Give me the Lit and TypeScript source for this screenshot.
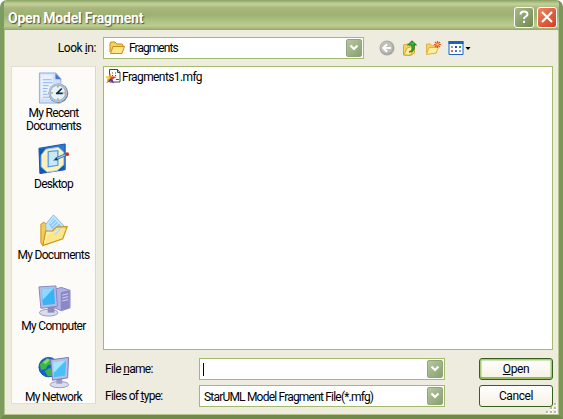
import { LitElement, html, svg, css } from "lit";
import { customElement, property } from "lit/decorators.js";

const base = css`
  * { box-sizing: border-box; }
  svg { display: block; flex: none; }
`;

const recentIcon = svg`
  <path d="M2.500 1.500h17l5 6v25h-22z" fill="#cfe0fa" stroke="#93aee6"/>
  <path d="M4 3h12v25H4z" fill="#f3f8ff" opacity=".7"/>
  <path d="M19 2v6h6z" fill="#4677ca"/>
  <path d="M6 8.500h9M6 11.500h10M6 14.500h6M6 17.500h5M6 20.500h4M6 23.500h5M6 26.500h7" stroke="#8db5f1" stroke-width="1"/>
  <circle cx="22" cy="22.500" r="10.200" fill="#71849b"/>
  <circle cx="21.500" cy="22" r="9.600" fill="#b9c4d0"/>
  <circle cx="21.500" cy="22" r="7.800" fill="#e4f4fd" stroke="#8aa4bb" stroke-width=".8"/>
  <path d="M21 22l4.500-4.500M19.500 22.500h7" stroke="#172d40" stroke-width="1.700"/>
  <path d="M21.500 15v1.600M21.500 27.500v1.500M14.500 22h1.700M27 22h1.600" stroke="#e37b32" stroke-width="1.300"/>`;

const desktopIcon = svg`
  <path d="M2 6L29 1.500v26.500L3 32z" fill="#2878d5" stroke="#1650a3"/>
  <path d="M2.500 7l8-1-8 9zM28 20v8l-9 1.500zM3 25l7 6-7 1z" fill="#1458b5"/>
  <path d="M9 7l13-2 5.500 5v13l-7 6-10 1.500L4.500 25V13z" fill="#fff1bd" stroke="#9ccdf5"/>
  <path d="M11.500 9.500l10-1v15l-10 1.500z" fill="#c8e9fc" stroke="#4d9ce5" stroke-width="1.300"/>
  <path d="M19 16l10-4.500 1 2-10.500 4.500z" fill="#97caf1" stroke="#27659e" stroke-width=".8"/>
  <path d="M16.500 18.500l4-3 1 2.800z" fill="#173a57"/>
  <circle cx="31" cy="12" r="2" fill="#d42e25"/>`;

const documentsIcon = svg`
  <path d="M4 11l3-2 5 4v18l-7 1-1-2z" fill="#f3cc57" stroke="#c79317"/>
  <path d="M9 11L17 1.500 28 13l-7 12-12-8z" fill="#c2e3fb" stroke="#7fb9e6"/>
  <path d="M12 11l5-6 8 8-5 8z" fill="#8fc8f4"/>
  <path d="M13 11l5-5M15 13l5-5M17 15l5-5" stroke="#e4f5ff"/>
  <path d="M9 18h7l4-4 11-.5-4.500 12.500L6 33z" fill="#ffe68a" stroke="#c9961b" stroke-width="1.200"/>
  <path d="M17 19l4-3 5-1-7 8z" fill="#bcdff4"/>
  <path d="M8 30l2.500-10h7l4-3" fill="none" stroke="#fff4b6"/>`;

const computerIcon = svg`
  <path d="M18 5l7-2 9 3v18l-9 3-7-3z" fill="#b2b1e3" stroke="#8584be"/>
  <path d="M24.500 8l9-2v18l-9 3z" fill="#8988c8"/>
  <path d="M26 11l6-1.500M26 14l6-1.500M26 17l6-1.500" stroke="#d6d6f3"/>
  <ellipse cx="12" cy="29" rx="9.500" ry="3.500" fill="#dcdcf0" stroke="#9898c1"/>
  <path d="M11 22h7v7h-7z" fill="#8c8cbd"/>
  <path d="M2 2.500L19.500 1.500l1.500 21-17 2z" fill="#b9bbe5" stroke="#8387c2"/>
  <path d="M4.500 5L17.500 3.500l1 16.500-12.500 1.500z" fill="#38b3f4"/>
  <path d="M4.500 5L17.500 3.500 6 16z" fill="#8bdbff"/>`;

const networkIcon = svg`
  <circle cx="12" cy="12" r="10" fill="#1861ca" stroke="#1550a5"/>
  <path d="M3 9l7-6 7 1-2 5-4 1-2 4-5 1zM8 16l5-3 4 2-1 6-5 0z" fill="#39b849"/>
  <path d="M6 7l5-4 2 2-4 4z" fill="#8bdc63"/>
  <ellipse cx="23" cy="30" rx="9.500" ry="3.200" fill="#dcdcf0" stroke="#9596bd"/>
  <path d="M20 22l6-1v8h-6z" fill="#9b9dc3"/>
  <path d="M14 4.500l18.500-2.500-1 21-15.500 2.500z" fill="#b9bce6" stroke="#7479b2"/>
  <path d="M16.500 7l13.500-2-1 15.500-11.500 2z" fill="#47c0f7"/>
  <path d="M16.500 7l13.500-2-13 13z" fill="#a2e6ff"/>`;

@customElement("place-item")
class PlaceItem extends LitElement {
  @property({ attribute: false }) icon: unknown;
  static styles = [base, css`
    :host { display: flex; flex-direction: column; align-items: center; text-align: center;
      line-height: 13px; height: 71px; white-space: pre; }
    svg { margin-bottom: 2px; }
  `];
  render() {
    return html`<svg width="34" height="34" viewBox="0 0 35 34">${this.icon}</svg><slot></slot>`;
  }
}

@customElement("combo-box")
class ComboBox extends LitElement {
  static styles = [base, css`
    :host { display: flex; box-sizing: border-box; align-items: center; border: 1px solid #a3ba6c; background: #fff;
      height: 22px; padding: 1px; }
    .value { flex: 1; display: flex; align-items: center; }
    .arrow { width: 16px; height: 18px; border-radius: 2px; border: 1px solid #93a57c;
      background: linear-gradient(135deg, #b8c7a0, #87a070); display: grid; place-items: center; }
  `];
  render() {
    return html`<div class="value"><slot></slot></div>
      <div class="arrow"><svg width="10" height="8" viewBox="0 0 10 8">
        <path d="M1.500 1.500L5 5l3.500-3.500" fill="none" stroke="#fff" stroke-width="2.200"/></svg></div>`;
  }
}

@customElement("app-root")
class AppRoot extends LitElement {
  static styles = [base, css`
    :host { display: block; width: 563px; height: 419px; background: #fff; color: #000;
      font: 12px/14px Roboto, "Liberation Sans", sans-serif; letter-spacing: -0.72px; overflow: hidden; }
    .window { height: 419px; background: #eeebdf; border: solid #8ea56a; border-width: 0 4px 4px;
      border-color: #8ea56a #7c9559 #71894b #7c9c60; border-radius: 7px 7px 0 0; overflow: hidden;
      display: flex; flex-direction: column; }
    .title { height: 30px; flex: none; margin: 0 -4px; padding: 4px 6px 0 8px; display: flex; align-items: center;
      background: linear-gradient(#87a064 0, #a8bc7c 2px, #c5d19b 4px, #a7b77d 8px, #9fb073 15px, #b3c487 22px, #bdcc91 26px, #93a66c 30px);
      color: #fff; font: bold 14px Roboto, "Liberation Sans", sans-serif; letter-spacing: -0.22px;
      text-shadow: 1px 1px 1px #4b5933; }
    .title span { flex: 1; padding-top: 1px; }
    .cap { width: 20px; height: 21px; border: 1px solid #fff; border-radius: 3px; margin-left: 3px;
      display: grid; place-items: center; background: linear-gradient(135deg, #a7b88a, #72894f); }
    .close { background: linear-gradient(135deg, #ee8667, #cf3e20); }
    .content { flex: 1; border: solid #b6c48c; border-width: 0 1px 1px; padding: 7px 5px 6px 6px;
      display: grid; grid-template-columns: 85px 450px; grid-template-rows: 22px 1fr; column-gap: 7px; row-gap: 7px; }
    .look { justify-self: end; padding: 4px 0 0; white-space: nowrap; letter-spacing: -0.42px; }
    .bar { display: flex; align-items: center; }
    .bar combo-box { width: 261px; margin-right: 15px; letter-spacing: -0.95px; }
    .tool { margin-right: 7px; }
    .folder { margin: 0 4px 0 4px; }
    .places { background: #fdfbf8; border: 1px solid #e2dfd4; border-right-color: #d9d6cd; height: 338px;
      padding-top: 4px; overflow: hidden; letter-spacing: -0.7px; }
    .main { display: flex; flex-direction: column; }
    .list { height: 284px; border: 1px solid #a3ba6c; background: #fff; padding: 1px 2px; margin-bottom: 8px; }
    .file { display: flex; align-items: center; height: 18px; letter-spacing: -0.6px; }
    .file svg { margin-top: -2px; }
    .form { display: grid; grid-template-columns: 96px 246px 74px; row-gap: 5px; align-items: center; }
    .form > span { padding-left: 2px; }
    .form combo-box { width: 246px; }
    .caret { width: 1px; height: 13px; background: #000; margin-left: 2px; }
    .kind { padding: 1px 0 0 3px; letter-spacing: -0.8px; white-space: nowrap; }
    .button { height: 22px; width: 74px; margin-left: 34px; border: 1px solid #36611a; border-radius: 3px;
      display: grid; place-items: center; background: linear-gradient(#fff, #f6f1e3); letter-spacing: -0.4px; }
    .default { box-shadow: inset 0 -2px 0 #95b95f, inset 0 0 0 1.500px #a9c87a; }
    u { text-underline-offset: 1px; text-decoration-thickness: 1px; text-decoration-skip-ink: none; }
    .grip { position: absolute; left: 546px; top: 403px; }
  `];

  render() {
    return html`
      <div class="window">
        <div class="title"><span>Open Model Fragment</span>
          <div class="cap"><svg width="16" height="16" viewBox="0 0 16 16">
            <path d="M4.500 5.500C4.500 1.500 11.500 1.500 11.500 5.200C11.500 7.600 8 7.500 8 10M8 11.800v2.200" fill="none" stroke="#fff" stroke-width="2"/></svg></div>
          <div class="cap close"><svg width="16" height="16" viewBox="0 0 16 16">
            <path d="M3 3l10 10M13 3L3 13" stroke="#fff" stroke-width="2.200"/></svg></div>
        </div>
        <div class="content">
          <div class="look">Look <u>i</u>n:</div>
          <div class="bar">
            <combo-box>
              <svg class="folder" width="16" height="16" viewBox="0 0 16 16">
                <path d="M1 12V3l1-1h4l2 2h5l1 1v3" fill="#f5cf5b" stroke="#c39117"/>
                <path d="M1.500 13.500L4 6.500h11.500L13 13.500z" fill="#ffe588" stroke="#c39117"/>
              </svg>Fragments
            </combo-box>
            <svg class="tool" width="16" height="16" viewBox="0 0 16 16">
              <circle cx="8" cy="8" r="7.500" fill="#a9a9a5"/><circle cx="7.500" cy="7.300" r="6" fill="#bfbfba"/>
              <path d="M12 8H4.500M8 4.300L4.300 8 8 11.700" fill="none" stroke="#fff" stroke-width="2"/></svg>
            <svg class="tool" width="16" height="16" viewBox="0 0 16 16">
              <path d="M1.500 5l4-1 2 1 5-1v9l-4 2.500-7-.5z" fill="#f4d466" stroke="#d3a936"/>
              <path d="M2 15l3-7 7-2-3 9z" fill="#ffed9d" stroke="#d3a936"/>
              <path d="M7 12c3-1 3.500-3 2.500-7H5.500L10 .8 14.500 5H12c.8 4 0 7-5 7z" fill="#36b333" stroke="#146b20" stroke-width=".8"/></svg>
            <svg class="tool" width="16" height="16" viewBox="0 0 16 16">
              <path d="M1.500 13V4h4l1 1.500h5V13z" fill="#f4d062" stroke="#dfb347"/>
              <path d="M1.500 14.500L4 7.500h9.500L11 13z" fill="#fff0a1" stroke="#dfb347"/>
              <path d="M12.500 1v7M9 4.500h7M10 2l5 5M15 2l-5 5" stroke="#e45427" stroke-width="1.200"/><circle cx="12.500" cy="4.500" r="1.300" fill="#ffc15d"/></svg>
            <svg width="24" height="16" viewBox="0 0 24 16">
              <path d="M1 1.500h14v13H1z" fill="#fff" stroke="#1764c9"/><path d="M.5 1h15v3H.5z" fill="#1764c9"/>
              <path d="M3 6h2v2H3zM11 10h2v2h-2z" fill="#789ed4"/><path d="M7 6h2v2H7z" fill="#2b4fc0"/><path d="M7 10h2v2H7z" fill="#5b75bb"/>
              <path d="M11 6h2v2h-2z" fill="#259a35"/><path d="M3 10h2v2H3z" fill="#df6b4a"/>
              <path d="M17.500 7h5L20 10z" fill="#000"/></svg>
          </div>
          <div class="places">
            <place-item .icon=${recentIcon}>My Recent\nDocuments</place-item>
            <place-item .icon=${desktopIcon}>Desktop</place-item>
            <place-item .icon=${documentsIcon}>My Documents</place-item>
            <place-item .icon=${computerIcon}>My Computer</place-item>
            <place-item .icon=${networkIcon}>My Network</place-item>
          </div>
          <div class="main">
            <div class="list"><div class="file">
              <svg width="16" height="16" viewBox="0 0 16 16">
                <path d="M3.500 1.500h8l2.500 3v9.500H3.500z" fill="#fff" stroke="#444"/><path d="M11.500 1.500v3H14" fill="none" stroke="#444"/>
                <path d="M6 5h1M9 5h1M6 7.500h1M9 7.500h1M10 11.500h3" stroke="#555"/>
                <path d="M4 4.500L5.500 8.500l5 .2-4 2.500 1.500 4.300-4-2.500L.5 15.500l1-4.500L-.5 8.500h3.500z" fill="#f69c20"/>
                <path d="M5.500 8.500l5 .2-4 2.500-2.500-.7z" fill="#e93a3a"/><path d="M4 10.500l2.500.7 1.500 4.300-4-2.500-2.500 1.500z" fill="#5a35be"/><path d="M0 8.500h3L4 10.500l-2.500.5z" fill="#ffd92b"/>
              </svg>Fragments1.mfg</div></div>
            <div class="form">
              <span>File <u>n</u>ame:</span><combo-box><div class="caret"></div></combo-box>
              <div class="button default"><span><u>O</u>pen</span></div>
              <span>Files of <u>t</u>ype:</span><combo-box><div class="kind">StarUML Model Fragment File(*.mfg)</div></combo-box>
              <div class="button">Cancel</div>
            </div>
          </div>
        </div>
      </div>
      <svg class="grip" width="12" height="12" viewBox="0 0 12 12">
        <path d="M8 0h3v3H8zM4 4h3v3H4zM8 4h3v3H8zM0 8h3v3H0zM4 8h3v3H4zM8 8h3v3H8z" fill="#fff"/>
        <path d="M8 0h2v2H8zM4 4h2v2H4zM8 4h2v2H8zM0 8h2v2H0zM4 8h2v2H4zM8 8h2v2H8z" fill="#b9b6a6"/></svg>`;
  }
}
